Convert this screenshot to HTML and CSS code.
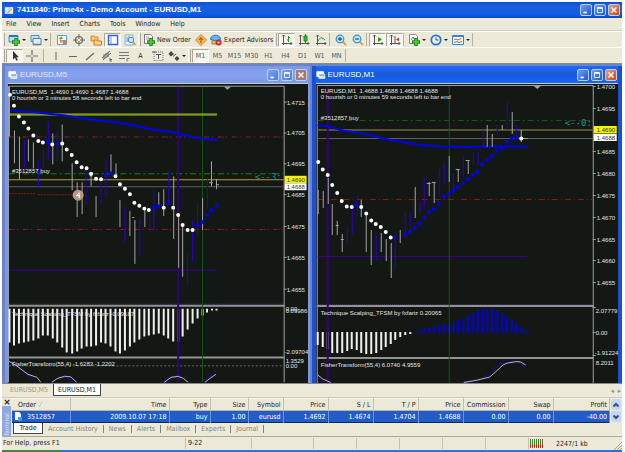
FILE: index.html
```html
<!DOCTYPE html>
<html lang="en">
<head>
<meta charset="utf-8">
<title>7411840: Prime4x - Demo Account - EURUSD,M1</title>
<link rel="stylesheet" href="styles.css">
</head>
<body>
<svg class="defs" aria-hidden="true">
  <symbol id="i-plus" viewBox="0 0 12 12"><path d="M7 4v8M3 8h8" stroke="#1d8a1d" stroke-width="3.6"/><path d="M7 5v6M4 8h6" stroke="#4fd43c" stroke-width="1.6"/></symbol>
  <symbol id="i-bars" viewBox="0 0 12 12"><path d="M2.5 1v10M1 9.500h10M1 2.500l1.500-1.500L4 2.500M9.500 8L11 9.500 9.500 11" fill="none" stroke="#555"/></symbol>
  <symbol id="i-chartwin" viewBox="0 0 12 12"><path d="M1 2h8v6H1z" fill="#fff" stroke="#fff"/><path d="M3.500 5h7v5h-7z" fill="#cfe2fb" stroke="#fff"/><path d="M4 6h6" stroke="#2c62c8"/></symbol>
  <symbol id="i-min" viewBox="0 0 12 12"><path d="M3 9h4" stroke="#fff" stroke-width="2"/></symbol>
  <symbol id="i-max" viewBox="0 0 12 12"><path d="M3 3.500h6v5.500H3z" fill="none" stroke="#fff"/><path d="M3 3.500h6" stroke="#fff" stroke-width="2"/></symbol>
  <symbol id="i-close" viewBox="0 0 12 12"><path d="M3 3l6 6M9 3l-6 6" stroke="#fff" stroke-width="1.700"/></symbol>
</svg>

<header class="titlebar">
  <svg class="app-icon" viewBox="0 0 12 12"><path d="M1 2h10v8H1z" fill="#e9edda"/><path d="M2 8l5-5 3 1-5 5z" fill="#9aa79a"/><path d="M2 9L9 3" stroke="#fff"/></svg>
  <h1>7411840: Prime4x - Demo Account - EURUSD,M1</h1>
  <div class="winbtns">
    <button aria-label="Minimize"><svg><use href="#i-min"/></svg></button>
    <button aria-label="Restore"><svg><use href="#i-max"/></svg></button>
    <button class="close" aria-label="Close"><svg><use href="#i-close"/></svg></button>
  </div>
</header>

<nav class="menu">
  <button>File</button><button>View</button><button>Insert</button><button>Charts</button><button>Tools</button><button>Window</button><button>Help</button>
</nav>

<div class="toolbar">
  <i class="grip"></i>
  <button class="tb drop" aria-label="New chart"><svg viewBox="0 0 12 12"><path d="M1 2h9v6H1z" fill="#b9dcf4" stroke="#3f8fc4"/><path d="M1 2h9" stroke="#2877b4" stroke-width="2"/><use href="#i-plus" x="1" y="0" width="12" height="12"/></svg></button>
  <button class="tb drop" aria-label="Profiles"><svg viewBox="0 0 12 12"><path d="M1 1.500h8v6H1z" fill="#c5e0f6" stroke="#4c92c8"/><path d="M3 4.500h8v6H3z" fill="#dceefc" stroke="#4c82b8"/><path d="M3 10.500h8" stroke="#777" stroke-width="1.500"/></svg></button>
  <i class="sep"></i>
  <button class="tb" aria-label="Market Watch"><svg viewBox="0 0 12 12"><path d="M1.500 1.500h9v9h-9z" fill="#fff" stroke="#5aa0d8"/><path d="M3 5l2-2.500L7 5z" fill="#22a022"/><path d="M6 6h4v4H7z" fill="#e27a20"/><path d="M4 6h1v3" stroke="#d02828" fill="none"/></svg></button>
  <button class="tb" aria-label="Data Window"><svg viewBox="0 0 12 12"><circle cx="6" cy="6" r="3.500" fill="none" stroke="#666" stroke-width="1.200"/><path d="M6 0v5M6 7v5M0 6h5M7 6h5" stroke="#666"/></svg></button>
  <button class="tb" aria-label="Navigator"><svg viewBox="0 0 12 12"><path d="M1 2h3l1 1h3v4H1z" fill="#f8c878" stroke="#d88428"/><path d="M4 6h3l1 1h3.500v4H4z" fill="#fbd28a" stroke="#d87828"/></svg></button>
  <button class="tb on" aria-label="Terminal"><svg viewBox="0 0 12 12"><path d="M1.500 1.500h9v9h-9z" fill="#fff" stroke="#2a6ad0" stroke-width="1.400"/><path d="M4 2v8" stroke="#6a9ae8"/><path d="M2 3v1M2 6v1" stroke="#d33"/></svg></button>
  <button class="tb" aria-label="Strategy Tester"><svg viewBox="0 0 12 12"><path d="M1 1h8v10H1z" fill="#e4f0fb" stroke="#8ab4d8"/><path d="M3 3v5M5 2v4" stroke="#5a9ad0"/><circle cx="7" cy="6" r="2.700" fill="#cde6fa" stroke="#4a88bc"/><path d="M9 8l2.500 3" stroke="#d89a30" stroke-width="1.800"/></svg></button>
  <i class="grip"></i>
  <button class="tb text order"><svg viewBox="0 0 12 12"><path d="M1.500.500h6l2 2v7h-8z" fill="#fff" stroke="#777"/><path d="M3 3h3M3 5h3" stroke="#999"/><use href="#i-plus" x="1" y="0" width="12" height="12"/></svg>New Order</button>
  <button class="tb" aria-label="MetaEditor"><svg viewBox="0 0 12 12"><path d="M6 .500L11.500 6 6 11.500.500 6z" fill="#f6b65a" stroke="#d98a2c"/><path d="M4 6l2-2.500L8 6M6 4v5" fill="none" stroke="#8a5210"/></svg></button>
  <button class="tb text experts"><svg viewBox="0 0 12 12"><path d="M2 6h7v4H2z" fill="#f0c060" stroke="#a07830"/><path d="M0 5c2-5 9-5 11 0L6 7z" fill="#6ab2ec" stroke="#3a7ab8"/><circle cx="8.500" cy="8.500" r="3" fill="#dc2a20"/><path d="M7.500 8.500h2" stroke="#fff" stroke-width="1.500"/></svg>Expert Advisors</button>
  <i class="grip"></i>
  <button class="tb on" aria-label="Bar chart"><svg viewBox="0 0 12 12"><use href="#i-bars"/><path d="M7.500 2v6M6 6h1.500M7.500 3.500H9" stroke="#1c9a1c"/></svg></button>
  <button class="tb" aria-label="Candlesticks"><svg viewBox="0 0 12 12"><use href="#i-bars"/><path d="M7.500 0v9" stroke="#168a16"/><path d="M6 2h3v5H6z" fill="#2cc42c" stroke="#168a16"/></svg></button>
  <button class="tb" aria-label="Line chart"><svg viewBox="0 0 12 12"><use href="#i-bars"/><path d="M3 7c2-4 4-4 7-1" fill="none" stroke="#1c9a1c"/></svg></button>
  <i class="sep"></i>
  <button class="tb" aria-label="Zoom in"><svg viewBox="0 0 12 12"><path d="M7.500 7.500L11 11" stroke="#dba42c" stroke-width="2"/><circle cx="5" cy="5" r="3.800" fill="#c8e6fc" stroke="#3c8ccc" stroke-width="1.200"/><path d="M5 3v4M3 5h4" stroke="#1a5aa8" stroke-width="1.300"/></svg></button>
  <button class="tb" aria-label="Zoom out"><svg viewBox="0 0 12 12"><path d="M7.500 7.500L11 11" stroke="#dba42c" stroke-width="2"/><circle cx="5" cy="5" r="3.800" fill="#c8e6fc" stroke="#3c8ccc" stroke-width="1.200"/><path d="M3 5h4" stroke="#1a5aa8" stroke-width="1.300"/></svg></button>
  <i class="sep"></i>
  <button class="tb on" aria-label="Auto scroll"><svg viewBox="0 0 12 12"><use href="#i-bars"/><path d="M6 3l4 2.500L6 8z" fill="#1c9a1c"/></svg></button>
  <button class="tb on" aria-label="Chart shift"><svg viewBox="0 0 12 12"><use href="#i-bars"/><path d="M10 3.500L7 5.500l3 2z" fill="#c82a18"/><path d="M6 2v7" stroke="#555"/></svg></button>
  <i class="sep"></i>
  <button class="tb drop" aria-label="Indicators"><svg viewBox="0 0 12 12"><path d="M1.500.500h6l2 2v7h-8z" fill="#fff" stroke="#888"/><path d="M3 6l2-3 2 3" fill="none" stroke="#777"/><use href="#i-plus" x="1" y="0" width="12" height="12"/></svg></button>
  <button class="tb drop" aria-label="Periodicity"><svg viewBox="0 0 12 12"><circle cx="6" cy="6" r="4.700" fill="#e6f3fd" stroke="#2c74c0" stroke-width="1.800"/><path d="M6 3.500V6h2.500" fill="none" stroke="#444"/></svg></button>
  <button class="tb drop" aria-label="Templates"><svg viewBox="0 0 12 12"><path d="M.500 1.500h11v9H.500z" fill="#f6fbff" stroke="#3c84c8"/><path d="M1 2h10" stroke="#3c84c8" stroke-width="2"/><path d="M2 6l2-1 2 1 3-1.500" fill="none" stroke="#d04c2c"/><path d="M2 8.500l3-1 2 1 3-1" fill="none" stroke="#3a9a3a"/></svg></button>
  <i class="sep end"></i>
</div>

<div class="toolbar second">
  <i class="grip"></i>
  <button class="tb on" aria-label="Cursor"><svg viewBox="0 0 12 12"><path d="M4 1v8.500l2-1.800 1.300 3 1.500-.700-1.400-2.800H10z" fill="#333"/></svg></button>
  <button class="tb" aria-label="Crosshair"><svg viewBox="0 0 12 12"><path d="M6 0v5M6 7v5M0 6h5M7 6h5" stroke="#666" stroke-width="1.200"/></svg></button>
  <i class="sep gap"></i>
  <button class="tb" aria-label="Vertical line"><svg viewBox="0 0 12 12"><path d="M6 2v8" stroke="#666"/></svg></button>
  <button class="tb" aria-label="Horizontal line"><svg viewBox="0 0 12 12"><path d="M2 6.500h8" stroke="#666"/></svg></button>
  <button class="tb" aria-label="Trendline"><svg viewBox="0 0 12 12"><path d="M2 10l8-7" stroke="#666" stroke-width="1.200"/></svg></button>
  <button class="tb" aria-label="Channel"><svg viewBox="0 0 12 12"><path d="M1 8l8-7M2 10l8-7M3 4v5M5 3v5M7 2v5M9 8v3h2M9 9.500h2" fill="none" stroke="#666"/></svg></button>
  <button class="tb" aria-label="Fibonacci"><svg viewBox="0 0 12 12"><path d="M1 2.500h10M1 5.500h10M1 8.500h6M9 11.500V8.500h2.500" fill="none" stroke="#777"/></svg></button>
  <button class="tb" aria-label="Text">A</button>
  <button class="tb" aria-label="Text label"><svg viewBox="0 0 12 12"><path d="M2 2h9v8.500H2z" fill="none" stroke="#777" stroke-dasharray="1 1"/><path d="M4 4.500h5M6.500 4v5M0 2h4" stroke="#555"/></svg></button>
  <button class="tb drop" aria-label="Arrows"><svg viewBox="0 0 12 12"><path d="M3 1l3 3-3 2.500L.500 4zM9 6l2.500 2.500L9 11 6.500 8.500z" fill="#444"/><path d="M5 6.500L8 4" stroke="#555"/></svg></button>
  <i class="grip"></i>
  <div class="periods">
    <button class="on">M1</button><button>M5</button><button>M15</button><button>M30</button><button>H1</button><button>H4</button><button>D1</button><button>W1</button><button>MN</button>
  </div>
  <i class="sep end"></i>
</div>

<main class="mdi">
  <section class="chart inactive">
    <header>
      <svg class="doc"><use href="#i-chartwin"/></svg><h2>EURUSD,M5</h2>
      <div class="winbtns">
        <button aria-label="Minimize"><svg><use href="#i-min"/></svg></button>
        <button aria-label="Maximize"><svg><use href="#i-max"/></svg></button>
        <button class="close" aria-label="Close"><svg><use href="#i-close"/></svg></button>
      </div>
    </header>
    <svg class="plot" viewBox="8 84 301 299">
      <path class="frame" d="M8.500 383V85.500H285.500V383M285 101.500h3M285 132.500h3M285 163.500h3M285 194.500h3M285 226.500h3M285 257.500h3M285 289.500h3"/>
      <path class="divider" d="M8 306h278M8 358h278"/>
      <path class="dots" d="M9 304.500h276"/>
      <path class="zero" d="M9 366.500h276"/>
      <path class="level" d="M9 186.500h276"/>
      <path class="reddash" d="M9 136.500h276M9 229.500h276"/>
      <path class="purpledash" d="M9 136.500h276M9 229.500h276"/>
      <path class="greendash" d="M9 173.500h276"/>
      <path class="gold" d="M9 179.500h276"/>
      <path class="redthin" d="M9 193.500h27M38 194.500h38"/>
      <path class="violet" d="M9 270.500h209"/>
      <path class="bars" d="M9.500 309V343M14 309v37M19 309v35M24 309v34M28.500 309v33M33.500 309v32M38.500 309v30M43 309v27M48 309v27M53 309v30M57.500 309v34M62.500 309v39M67 309v44M72.500 309v45M77.500 309v43M82 309v40M87 309v38M91.500 309v38M96.500 309v37M101.500 309v34M106 309v35M111 309v38M116 309v43M120.500 309v45M125.500 309v42M130.500 309v38M135 309v34M140 309v31M145 309v28M149.500 309v27M154.500 309v26M159.500 309v25M164.500 309v27M169 309v30M174 309v33M179 309v33M183.500 309v28M188.500 309v21M193.500 309v15M198.500 309v10M203.500 309v7M208 309v4M213 309v2M217.500 309v2"/>
      <path class="vpurple" d="M179 86v297"/>
      <path class="vgreen" d="M203.500 86v297"/>
      <path class="gold2" d="M9 113.500h209"/><path class="green2" d="M9 114.500h209"/>
      <path class="ma" d="M9 110L37 112 65 115 90 119 118 122 135 125 155 129.500 170 131 190 136 205 138.500 218 139.500"/>
      <path class="wicks" d="M9.500 86v50M14.500 130v33M19.500 136v43M28.500 139v22M33.500 142v26M53 133v31M62.500 124v37M72.500 163v27M77.500 182v35M82.500 182v32M91.500 172v14M96.500 196v21M111.500 154v18M116.500 163v14M120.500 200v27M130.500 211v25M135.500 220v44M145.500 207v20M159.500 192v15M164.500 189v27M174.500 176v63M179.500 215v53M183.500 225v52M203.500 198v32M212.500 161v25M217.500 179v10M210 182.500h4M217 184.500h3M90 175.500h3M133 217.500h2"/>
      <path class="bwicks" d="M24.500 140v28M38.500 160v28M43.500 148v20M48.500 121v38M57.500 130v31M86.500 171v33M101.500 180v23M106.500 158v37M125.500 207v35M140.500 220v37M150.500 214v18M154.500 190v39M169.500 171v34M188.500 254v32M193.500 220v41M198.500 204v32M208.500 177v32"/>
      <path class="wdots" d="M10 94h0M14 105h0M19 116h0M24 122h0M28.500 128h0M33.500 135h0M38.500 140.500h0M43 142h0M52.500 144h0M62.500 143h0M67 149h0M72 154.500h0M77 162h0M82 167h0M87 168h0M91.500 173.500h0M96.500 178.500h0M101.500 179h0M116 176h0M120.500 184h0M125.500 188.500h0M130.500 194h0M135 202.500h0M140 205.500h0M145 208.500h0M149.500 210h0M164.500 207.500h0M174 207.500h0M179 215h0M183.500 225h0M188.500 230h0M193.500 230h0"/>
      <path class="bdots" d="M48 141h0M57.500 143h0M106 175h0M111 173h0M154 207.500h0M159 206h0M169 203h0M198 225.500h0M203 222h0M208 215h0M212.500 210h0M217.500 205h0"/>
      <path class="curveb" d="M9 361L17 367 27 375 36 383M52 383L60 378 67 378 73 383M162 383l8-4 8-1M205 383l6-6 6-3"/>
      <path class="curve" d="M9 362L16 366 28 375 37 378 41 383M52 383L58 379 65 377 71 377.500 77 383M165 383L172 378 179 377 184 379 189 383M206 383l5-4 6-4"/>
      <circle cx="78.500" cy="195" r="5.500" fill="#b59a80"/><path d="M77 195.500l2.500-3v5.500M77 195.500h3.500" fill="none" stroke="#fff"/>
      <path d="M225 86h7l-3.500 3z" fill="#9aa4a4"/>
      <text x="12" y="93" xml:space="preserve">EURUSD,M5  1.4690 1.4690 1.4687 1.4688</text>
      <text x="12" y="99">0 hourish or 3 minutes 58 seconds left to bar end</text>
      <text x="12" y="173">#3512857 buy</text>
      <text class="count" x="256" y="180">&lt;--3:</text>
      <text x="12" y="316">Technique Scalping_TFSM by fxfariz -0.09187</text>
      <text x="12" y="367">FisherTransform(55,4) -1.6283 -1.2202</text>
      <path d="M286 175.500h22v7.500h-22z" fill="#f4f400"/><path d="M286 183h22v7h-22z" fill="#fff"/>
      <g class="axis"><text x="288" y="104">1.4715</text><text x="288" y="135">1.4705</text><text x="288" y="166">1.4695</text><text class="dark" x="288" y="182">1.4690</text><text class="dark" x="288" y="189">1.4688</text><text x="288" y="197">1.4685</text><text x="288" y="229">1.4675</text><text x="288" y="260">1.4665</text><text x="288" y="292">1.4655</text><text x="287" y="311">0.00</text><text x="287" y="313">0.09986</text><text x="286" y="355">-2.09704</text><text x="287" y="364">1.3529</text><text x="287" y="369">0.00</text></g>
    </svg>
  </section>

  <section class="chart active">
    <header>
      <svg class="doc"><use href="#i-chartwin"/></svg><h2>EURUSD,M1</h2>
      <div class="winbtns">
        <button aria-label="Minimize"><svg><use href="#i-min"/></svg></button>
        <button aria-label="Maximize"><svg><use href="#i-max"/></svg></button>
        <button class="close" aria-label="Close"><svg><use href="#i-close"/></svg></button>
      </div>
    </header>
    <svg class="plot" viewBox="317 84 301 299">
      <path class="frame" d="M317.500 383V85.500H593.500V383M593 86.500h3M593 108.500h3M593 151.500h3M593 173.500h3M593 195.500h3M593 217.500h3M593 239.500h3M593 260.500h3M593 282.500h3M593 307.500h3M593 332.500h3M593 355.500h3"/>
      <path class="divider" d="M317 306h277M317 358h277"/>
      <path class="dots" d="M318 304.500h276"/>
      <path class="level" d="M318 138.500h275"/>
      <path class="greendash dim" d="M318 120.500h275"/>
      <path class="olive" d="M318 130h275"/>
      <path class="reddash solid" d="M318 199.500h275"/>
      <path class="violet" d="M318 256.500h209"/>
      <path class="bars" d="M318 332v13M323 332v15M328 332v17M332.500 332v21M337.500 332v21M342.500 332v21M347.500 332v19M352 332v17M357 332v18M361.500 332v21M366.500 332v22M371.500 332v22M376.500 332v21M381.500 332v18M386 332v15M391 332v12M395.500 332v8M400.500 332v5M405.500 332v3M410.500 332v2"/>
      <path class="bbars" d="M415.500 333v-1M420 333v-3M424.500 333v-5M429.500 333v-6M434.500 333v-7M439.500 333v-8M444 333v-9M449 333v-9M454 333v-11M458.500 333v-13M463.500 333v-15M468.500 333v-18M473.500 333v-20M478 333v-23M483 333v-24M487.500 333v-24M492.500 333v-24M497.500 333v-22M502.500 333v-20M507 333v-16M512 333v-13M516.500 333v-9M521.500 333v-6M526.500 333v-3"/>
      <path class="vpurple" d="M328 86v297"/>
      <path class="vgreen" d="M449.500 86v297"/>
      <path class="ma" d="M318 125L330 127 345 131 362 133 381 138 402 142 420 145 440 146.500 466 147 490 146.500 527 146.500"/>
      <path class="wicks" d="M318.500 190v24M323.500 191v17M328.500 178v26M332.500 204v31M337.500 221v14M342.500 234v18M361.500 200v17M366.500 213v39M371.500 230v35M381.500 233v19M386.500 239v22M391.500 243v35M400.500 230v13M415.500 187v31M429.500 182v14M434.500 182v21M449.500 156v26M458.500 169v13M468.500 160v14M487.500 125v22M492.500 134v13M502.500 125v5M512.500 112v22M521.500 130v12M522 138.500h6M427 183.500h4M432 182.500h4M456 169.500h4M466 160.500h4M336 225.500h3M341 239.500h3"/>
      <path class="bwicks" d="M347.500 226v17M352.500 203v31M357.500 195v22M376.500 235v26M395.500 238v32M405.500 213v25M410.500 213v13M420.500 202v10M424.500 178v28M439.500 169v27M444.500 164v19M453.500 173v17M463.500 156v22M473.500 152v13M478.500 152v13M483.500 130v18M497.500 125v9M507.500 102v28M516.500 125v13"/>
      <path class="wdots" d="M318.500 162h0M323 169.500h0M328 175h0M332.500 185h0M337.500 193h0M342 201h0M347 206.500h0M352 207h0M361.500 207h0M366.500 213.500h0M371.500 220.500h0M376 224h0M381 227h0M386 232h0M391 237.500h0M521.500 138.500h0"/>
      <path class="bdots" d="M356.500 205h0M395 237h0M405 234.500h0M410 231.500h0M415 228h0M419.500 223.500h0M424.500 217.500h0M429 212h0M434 209h0M439 203.500h0M444 196.500h0M449 193.500h0M453.500 190.500h0M458 187h0M463 183h0M468 179h0M473 175h0M477.500 172h0M482.500 164.500h0M487.500 160h0M492 156h0M497 151h0M502 148h0M507 141.500h0M512 138.500h0M516.500 138.500h0"/>
      <path class="curveb" d="M318 379L324 382M464 382L480 380 490 374 497 366 503 363 515 361 520 363 526 369"/>
      <path class="curve" d="M318 375L323 379 331 382.500M464 382.500L478 380 490 377 498 370 503 365 508 363 517 361.500 521 362 526 365"/>
      <path d="M534 86h7l-3.500 3z" fill="#9aa4a4"/>
      <text x="321" y="93" xml:space="preserve">EURUSD,M1  1.4688 1.4688 1.4688 1.4688</text>
      <text x="321" y="99">0 hourish or 0 minutes 59 seconds left to bar end</text>
      <text x="321" y="120">#3512857 buy</text>
      <text class="count" x="565" y="126">&lt;--0:</text>
      <text x="321" y="315">Technique Scalping_TFSM by fxfariz 0.20065</text>
      <text x="321" y="367">FisherTransform(55,4) 6.0740 4.9559</text>
      <path d="M594 126h23v7.500h-23z" fill="#f4f400"/><path d="M594 134h23v7h-23z" fill="#fff"/>
      <g class="axis"><text x="597" y="89">1.4700</text><text x="597" y="111">1.4695</text><text class="dark" x="597" y="132">1.4690</text><text class="dark" x="597" y="140">1.4688</text><text x="597" y="154">1.4685</text><text x="597" y="176">1.4680</text><text x="597" y="198">1.4675</text><text x="597" y="220">1.4670</text><text x="597" y="242">1.4665</text><text x="597" y="263">1.4660</text><text x="597" y="285">1.4655</text><text x="596" y="313">2.07779</text><text x="596" y="335">0.00</text><text x="595" y="355">-1.91224</text><text x="596" y="365">8.2011</text></g>
    </svg>
  </section>
</main>

<div class="charttabs">
  <button>EURUSD,M5</button><button class="on">EURUSD,M1</button>
  <span class="arrows"><button aria-label="Scroll left">◂</button><button aria-label="Scroll right">▸</button></span>
</div>

<section class="terminal">
  <div class="side"><button aria-label="Close terminal">×</button><span>Terminal</span></div>
  <div class="panel">
    <div class="trades">
      <table>
        <colgroup><col class="c-order"><col class="c-time"><col class="c-type"><col class="c-size"><col class="c-symbol"><col class="c-num"><col class="c-num"><col class="c-num"><col class="c-num"><col class="c-num"><col class="c-num"><col></colgroup>
        <thead><tr><th>Order <span class="sort">&nbsp;⁄</span></th><th>Time</th><th>Type</th><th>Size</th><th>Symbol</th><th>Price</th><th>S / L</th><th>T / P</th><th>Price</th><th>Commission</th><th>Swap</th><th>Profit</th></tr></thead>
        <tbody><tr><td><svg viewBox="0 0 8 9"><path d="M1 0h4l2 2v6H1z" fill="#fff"/><path d="M4 5h4v4H4z" fill="#3aa0e8"/></svg>3512857</td><td>2009.10.07 17:18</td><td>buy</td><td>1.00</td><td>eurusd</td><td>1.4692</td><td>1.4674</td><td>1.4704</td><td>1.4688</td><td>0.00</td><td>0.00</td><td>-40.00</td></tr></tbody>
      </table>
      <div class="scroll">
        <button aria-label="Scroll up"><svg viewBox="0 0 8 8"><path d="M1.500 5.500L4 3l2.500 2.500" /></svg></button>
        <button aria-label="Scroll down"><svg viewBox="0 0 8 8"><path d="M1.500 2.500L4 5l2.500-2.500" /></svg></button>
      </div>
    </div>
    <div class="tabs"><button class="on">Trade</button><button>Account History</button><button>News</button><button>Alerts</button><button>Mailbox</button><button>Experts</button><button>Journal</button></div>
  </div>
</section>

<footer class="status">
  <span class="help">For Help, press F1</span><span class="profile">9-22</span><span class="s62"></span><span class="s43"></span><span class="s43"></span><span class="s43"></span><span class="s43"></span><span class="s43"></span>
  <span class="conn"><svg viewBox="0 0 15 9"><path d="M1.500 0v9M3.500 0v9M5.500 0v9M7.500 0v9" stroke="#3a8a2a"/><path d="M9.500 0v9M11.500 0v9M13.500 0v9" stroke="#5a6a2a"/><path d="M1 7h13" stroke="#b82a1a" stroke-width="3" stroke-dasharray="1 1"/></svg>2247/1 kb</span>
  <svg class="resize" viewBox="0 0 9 9"><path d="M1 9l8-8M4 9l5-5M7 9l2-2" stroke="#a8a490"/></svg>
</footer>
<div class="taskbar"><i></i></div>
</body>
</html>
```
FILE: styles.css
```css
* { box-sizing: border-box; }
html, body { margin: 0; height: 100%; }
body {
  display: flex;
  flex-direction: column;
  padding: 2px 3px 0 2px;
  background: #fff;
  color: #222;
  font: 7px/10px "DejaVu Sans Condensed", "DejaVu Sans", sans-serif;
  overflow: hidden;
}
h1, h2 { margin: 0; font-size: inherit; font-weight: inherit; }
button {
  padding: 0;
  border: 0;
  background: none;
  color: inherit;
  font: inherit;
  white-space: nowrap;
}
.defs { position: absolute; width: 0; height: 0; }

.titlebar {
  flex: none;
  display: flex;
  align-items: center;
  gap: 3px;
  height: 16px;
  padding: 0 2px;
  background: linear-gradient(#0a50d8, #1d5fdd 30%, #0d5ae6 80%, #0848c0);
  color: #fff;
}
.titlebar h1 { font: bold 8px/14px "Liberation Sans", sans-serif; }
.titlebar h1, .chart h2 { flex: 1; min-width: 0; overflow: hidden; white-space: nowrap; }
.app-icon { width: 10px; height: 11px; }
.winbtns { display: flex; gap: 2px; }
.winbtns button {
  display: flex;
  width: 12px;
  height: 12px;
  border: 1px solid #b8d0f8;
  border-radius: 2px;
  background: linear-gradient(135deg, #6f9cf4, #1f58d0);
}
.winbtns .close { background: linear-gradient(135deg, #eba080, #c84418); }
.winbtns svg { width: 10px; height: 10px; }

.menu {
  flex: none;
  display: flex;
  gap: 10px;
  height: 13px;
  padding-left: 4px;
  background: #ece9d8;
  border-bottom: 1px solid #d4d0bc;
}
.toolbar {
  flex: none;
  display: flex;
  align-items: center;
  height: 16px;
  border-top: 1px solid #fff;
  background: #ece9d8;
}
.second { height: 17px; border-bottom: 1px solid #8c8a80; }
.grip {
  flex: none;
  width: 3px;
  height: 13px;
  margin: 0 1px 0 0;
  border-left: 1px solid #fff;
  border-right: 1px solid #aca899;
}
.sep { flex: none; width: 3px; height: 13px; border-left: 1px solid #b5b19f; }
.gap { margin: 0 1px 0 3px; }
.tb {
  flex: none;
  display: flex;
  align-items: center;
  justify-content: center;
  width: 17px;
  height: 14px;
}
.tb svg { flex: none; width: 12px; height: 12px; }
.drop { width: 22px; gap: 2px; }
.drop::after { content: ""; border: 2px solid transparent; border-top-color: #222; border-bottom: 0; }
.text { justify-content: flex-start; gap: 2px; padding-left: 1px; }
.order { width: 50px; }
.experts { width: 65px; }
.on {
  border: 1px solid #aca899;
  border-right-color: #fff;
  border-bottom-color: #fff;
  background: #f7f5ee;
}
.periods { display: flex; color: #555; }
.periods button { width: 17px; height: 14px; }

.mdi {
  flex: 1;
  display: flex;
  gap: 2px;
  min-height: 0;
  padding: 2px 0 0 3px;
  background: #6884cc;
}
.chart { display: flex; flex-direction: column; min-width: 0; min-height: 0; }
.inactive { flex: 306 306 0; border: solid #7d98e2; border-width: 0 2px 0 3px; background: #7d98e2; }
.active { flex: 309 309 0; border: solid #1c50d4; border-width: 0 4px; background: #1c50d4; }
.chart header {
  flex: none;
  display: flex;
  align-items: center;
  gap: 2px;
  height: 18px;
  padding-right: 1px;
  color: #fff;
}
.inactive header { background: linear-gradient(#7c97e4, #86a2ee 50%, #7d9ae6); color: #e0e6f6; border-bottom: 1px solid #c4c8d0; }
.active header { background: linear-gradient(#1c6cf4, #1a58dc 50%, #1468f4); border-bottom: 1px solid #c4c8d0; }
.chart h2 { font: 8px/12px "Liberation Sans", sans-serif; }
.doc { width: 10px; height: 10px; }
.inactive .winbtns button { background: linear-gradient(135deg, #7fa4ee, #4a7cd8); }
.inactive .winbtns .close { background: #a8786c; }
.plot { display: block; flex: 1; min-height: 0; width: 100%; background: #141815; fill: none; }
.plot text { fill: #e4e4e4; font: 6px "Liberation Sans", sans-serif; }
.plot .axis .dark { fill: #333; }
.plot .count { fill: #1f8f8f; font: 9px "DejaVu Sans Mono", monospace; }
.frame { stroke: #a0a09c; }
.divider { stroke: #94948e; stroke-width: 2; }
.dots { stroke: #403870; stroke-dasharray: 1 1; }
.zero { stroke: #666; stroke-dasharray: 2 2; }
.level { stroke: #5c605c; }
.reddash { stroke: #b01818; stroke-dasharray: 3 5 1 5; }
.solid { stroke: #901414; stroke-dasharray: 6 3 1 3; }
.purpledash { stroke: #5a1080; stroke-dasharray: 3 11; stroke-dashoffset: -3; }
.greendash { stroke: #1c7c1c; stroke-dasharray: 6 3 2 3; }
.dim { stroke: #145414; }
.gold { stroke: #b89c24; }
.gold2 { stroke: #e4c81c; }
.green2 { stroke: #6cc41c; }
.olive { stroke: #56532f; stroke-width: 2; }
.redthin { stroke: #8c1818; stroke-dasharray: 2 1; }
.violet { stroke: #340090; }
.vpurple { stroke: #340078; stroke-width: 2; }
.vgreen { stroke: #145218; }
.bars { stroke: #f0f0ec; stroke-width: 2; }
.bbars { stroke: #0000e8; stroke-width: 2; }
.ma { stroke: #0000f0; stroke-width: 2; }
.wicks { stroke: #a4a4a0; }
.bwicks { stroke: #2c00c8; }
.wdots, .bdots { stroke: #fff; stroke-width: 4; stroke-linecap: round; }
.bdots { stroke: #0000f8; }
.curve { stroke: #b8b8b8; }
.curveb { stroke: #2800c0; }

.charttabs {
  flex: none;
  display: flex;
  height: 14px;
  padding-left: 3px;
  border-top: 1px solid #8c8a80;
  background: #ece9d8;
  color: #999686;
}
.charttabs > button { width: 48px; height: 12px; }
.charttabs > .on { border: 1px solid #444; border-top: 0; background: #fff; color: #222; }
.arrows { display: flex; gap: 4px; margin-left: auto; padding-right: 1px; }

.terminal {
  flex: none;
  display: flex;
  height: 39px;
  border-top: 1px solid #d0ccb8;
  background: #ece9d8;
}
.side { flex: none; display: flex; flex-direction: column; width: 10px; }
.side button { height: 8px; font: bold 9px/8px "DejaVu Sans", sans-serif; color: #222; }
.side span {
  flex: 1;
  width: 9px;
  background: #8fa8e0;
  color: #dce4f8;
  font-size: 6px;
  line-height: 9px;
  writing-mode: vertical-rl;
  transform: rotate(180deg);
}
.panel { flex: 1; min-width: 0; }
.trades { display: flex; }
table { flex: 1; width: 0; table-layout: fixed; border-collapse: collapse; }
th, td {
  height: 12px;
  padding: 0 2px 0 0;
  border-right: 1px solid #c4c0ac;
  font-weight: normal;
  text-align: right;
  white-space: nowrap;
}
th:first-child { padding-left: 6px; text-align: left; }
td:first-child { padding-left: 2px; text-align: left; }
td svg { width: 8px; height: 9px; margin-right: 5px; vertical-align: middle; }
thead tr { border-top: 1px solid #f8f6ee; border-bottom: 1px solid #b8b4a0; }
tbody tr { background: #225cc8; border-bottom: 1px solid #102850; color: #fff; }
td { border-right-color: #6c94dc; }
.sort { color: #999; }
.c-order { width: 58px; }
.c-time { width: 99px; }
.c-type { width: 41px; }
.c-size { width: 38px; }
.c-symbol { width: 35px; }
.c-num { width: 45px; }
.scroll { flex: none; display: flex; flex-direction: column; width: 12px; padding: 1px; gap: 1px; }
.scroll button { display: flex; justify-content: center; align-items: center; flex: 1; border-radius: 2px; background: #c6d8fa; }
.scroll svg { width: 8px; height: 8px; fill: none; stroke: #38507c; stroke-width: 2; }
.tabs { display: flex; height: 12px; margin-left: 1px; color: #858274; }
.tabs button { padding: 0 5px; line-height: 8px; border-right: 1px solid #858274; height: 8px; margin-top: 2px; }
.tabs .on { width: 30px; height: 11px; margin: 0; padding: 0; border: 1px solid #444; border-top: 0; background: #fff; color: #222; }

.status {
  flex: none;
  display: flex;
  align-items: center;
  height: 14px;
  border-top: 1px solid #aca899;
  background: #ece9d8;
}
.status > span { flex: none; height: 11px; padding-left: 2px; border-right: 1px solid #c4c0ac; }
.status .help { width: 184px; padding-left: 1px; }
.status .profile { width: 66px; }
.status .s62 { width: 62px; }
.status .s43 { width: 43px; }
.status .conn { flex: 1; display: flex; align-items: center; gap: 12px; padding-left: 0; border: 0; }
.conn svg { width: 15px; height: 9px; }
.resize { width: 9px; height: 9px; align-self: flex-end; }
.taskbar { flex: none; height: 2px; background: #1c78ec; }
.taskbar i { display: block; width: 57px; height: 2px; background: #3c8c3c; }
```
